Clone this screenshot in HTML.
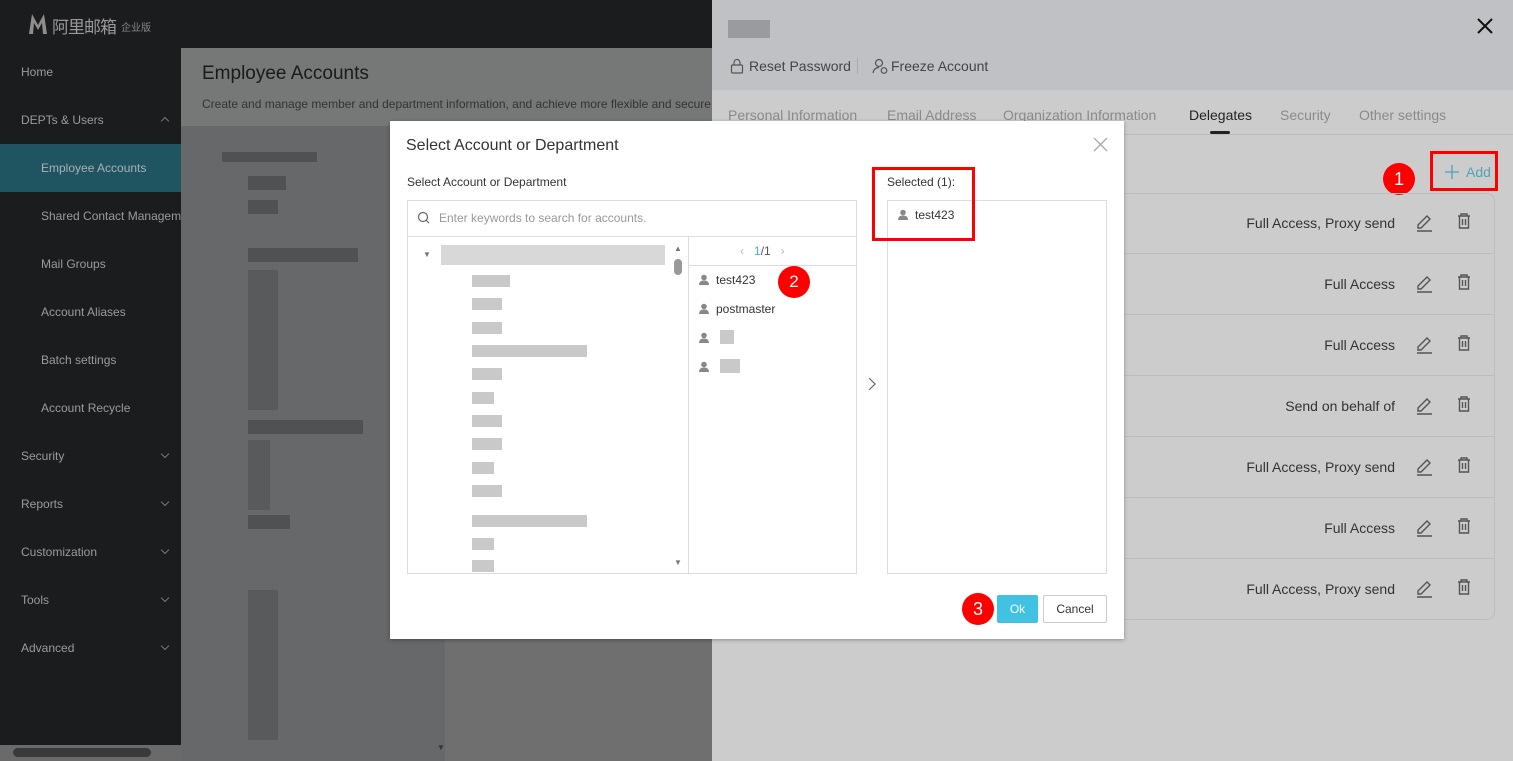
<!DOCTYPE html>
<html><head><meta charset="utf-8"><style>
*{box-sizing:border-box;margin:0;padding:0}
body{width:1513px;height:761px;overflow:hidden;position:relative;font-family:"Liberation Sans","Noto Sans CJK SC",sans-serif;background:#6b6c6e}
.abs{position:absolute}
#top{left:0;top:0;width:712px;height:48px;background:#1b1c1e}
#side{left:0;top:48px;width:181px;height:697px;background:#1b1c1e}
.nav{position:absolute;left:21px;font-size:12px;color:#9a9b9d}
.chev{position:absolute;left:162px;width:6px;height:6px;border-right:1px solid #777;border-bottom:1px solid #777;transform:rotate(45deg)}
.chevu{transform:rotate(-135deg)}
#main{left:181px;top:48px;width:531px;height:713px;background:#676869}
#mhead{left:181px;top:48px;width:531px;height:78px;background:#767777}
.blur{position:absolute;background:#505153}
#drawer{left:712px;top:0;width:801px;height:761px;background:#cccccc}
#dhead{left:712px;top:0;width:801px;height:90px;background:#c0c1c5}
.tab{position:absolute;top:107px;font-size:14px;color:#8a8a8a;font-family:"Liberation Sans",sans-serif}
.row{position:absolute;left:1107px;width:388px;height:61px;border-bottom:1px solid #bdbdbd;font-size:14px;color:#333;font-family:"Liberation Sans",sans-serif}
.row span{position:absolute;right:100px;top:22px;white-space:nowrap}
#modal{left:390px;top:121px;width:734px;height:518px;background:#fff;box-shadow:0 1px 4px rgba(0,0,0,.3)}
.box{position:absolute;border:1px solid #ddd}
.red{position:absolute;border:3px solid #f00}
.badge{position:absolute;width:32px;height:32px;border-radius:50%;background:#f00;color:#fff;font-size:18px;text-align:center;line-height:32px;font-family:"Liberation Sans",sans-serif}
.g{position:absolute;background:#c9c9c9}
</style></head><body>
<div id="top" class="abs"></div>
<svg class="abs" style="left:28px;top:13px" width="20" height="22"><path d="M1 21L4 1L10 12L16 1L19 21H15L14 10L10 17L6 10L5 21Z" fill="#8e8e8e"/></svg>
<div class="abs" style="left:52px;top:13px;font-size:17px;color:#999;white-space:nowrap;letter-spacing:-1px">阿里邮箱</div>
<div class="abs" style="left:121px;top:19px;font-size:10px;color:#888;white-space:nowrap">企业版</div>
<div id="side" class="abs"></div>
<div class="abs" style="left:0;top:144px;width:181px;height:48px;background:#1f5461"></div>
<div class="nav" style="top:65px">Home</div>
<div class="nav" style="top:113px">DEPTs &amp; Users</div><div class="chev chevu" style="top:118px"></div>
<div class="nav" style="top:161px;left:41px;color:#a6b2b6">Employee Accounts</div>
<div class="nav" style="top:209px;left:41px;white-space:nowrap;width:140px;overflow:hidden">Shared Contact Management</div>
<div class="nav" style="top:257px;left:41px">Mail Groups</div>
<div class="nav" style="top:305px;left:41px">Account Aliases</div>
<div class="nav" style="top:353px;left:41px">Batch settings</div>
<div class="nav" style="top:401px;left:41px">Account Recycle</div>
<div class="nav" style="top:449px">Security</div><div class="chev" style="top:451px"></div>
<div class="nav" style="top:497px">Reports</div><div class="chev" style="top:499px"></div>
<div class="nav" style="top:545px">Customization</div><div class="chev" style="top:547px"></div>
<div class="nav" style="top:593px">Tools</div><div class="chev" style="top:595px"></div>
<div class="nav" style="top:641px">Advanced</div><div class="chev" style="top:643px"></div>
<div class="abs" style="left:0;top:745px;width:181px;height:16px;background:#6a6a6a"></div>
<div class="abs" style="left:13px;top:748px;width:138px;height:9px;border-radius:5px;background:#3a3a3a"></div>
<div id="main" class="abs"></div>
<div class="abs" style="left:445px;top:126px;width:267px;height:635px;background:#6f6f6f"></div>
<div id="mhead" class="abs"></div>
<div class="abs" style="left:202px;top:63px;font-size:19px;color:#1a1a1a">Employee Accounts</div>
<div class="abs" style="left:202px;top:97px;font-size:12px;color:#333;white-space:nowrap">Create and manage member and department information, and achieve more flexible and secure</div>
<div class="abs" style="left:437px;top:743px;font-size:8px;color:#333">▼</div>
<div class="blur" style="left:222px;top:152px;width:95px;height:10px"></div>
<div class="blur" style="left:248px;top:176px;width:38px;height:14px"></div>
<div class="blur" style="left:248px;top:200px;width:30px;height:14px"></div>
<div class="blur" style="left:248px;top:248px;width:110px;height:14px"></div>
<div class="blur" style="left:248px;top:420px;width:115px;height:14px"></div>
<div class="blur" style="left:248px;top:515px;width:42px;height:14px"></div>
<div class="blur" style="left:248px;top:590px;width:30px;height:150px;opacity:.6"></div>
<div class="blur" style="left:248px;top:270px;width:30px;height:140px;opacity:.6"></div>
<div class="blur" style="left:248px;top:440px;width:22px;height:70px;opacity:.6"></div>
<div id="drawer" class="abs"></div>
<div id="dhead" class="abs"></div>
<div class="abs" style="left:728px;top:20px;width:42px;height:18px;background:#9a9b9f"></div>
<svg class="abs" style="left:1476px;top:17px" width="18" height="18"><path d="M2 2L16 16M16 2L2 16" stroke="#111" stroke-width="2"/></svg>
<svg class="abs" style="left:730px;top:58px" width="14" height="16"><rect x="1.5" y="7" width="11" height="8" rx="1" fill="none" stroke="#555" stroke-width="1.2"/><path d="M4 7V4.5a3 3 0 0 1 6 0V7" fill="none" stroke="#555" stroke-width="1.2"/></svg>
<div class="abs" style="left:749px;top:58px;font-size:14px;color:#444">Reset Password</div>
<div class="abs" style="left:857px;top:58px;width:1px;height:16px;background:#aaa"></div>
<svg class="abs" style="left:872px;top:58px" width="16" height="16"><circle cx="7" cy="5" r="3.5" fill="none" stroke="#555" stroke-width="1.2"/><path d="M1 15Q2 9.5 7 9.5" fill="none" stroke="#555" stroke-width="1.2"/><circle cx="12" cy="12.5" r="2.8" fill="none" stroke="#555" stroke-width="1.2"/></svg>
<div class="abs" style="left:891px;top:58px;font-size:14px;color:#444">Freeze Account</div>
<div class="tab" style="left:728px">Personal Information</div>
<div class="tab" style="left:887px">Email Address</div>
<div class="tab" style="left:1003px">Organization Information</div>
<div class="tab" style="left:1189px;color:#222">Delegates</div>
<div class="abs" style="left:1210px;top:131px;width:20px;height:3px;background:#222;border-radius:2px"></div>
<div class="tab" style="left:1280px">Security</div>
<div class="tab" style="left:1359px">Other settings</div>
<div class="abs" style="left:712px;top:134px;width:801px;height:1px;background:#bbb"></div>
<svg class="abs" style="left:1444px;top:164px" width="16" height="16"><path d="M8 1V15M1 8H15" stroke="#4fa3b8" stroke-width="1.3"/></svg>
<div class="abs" style="left:1466px;top:164px;font-size:14px;color:#4fa3b8">Add</div>
<div class="red" style="left:1430px;top:151px;width:68px;height:40px"></div>
<div class="badge" style="left:1383px;top:163px">1</div>
<div class="abs" style="left:1080px;top:193px;width:415px;height:427px;border:1px solid #bdbdbd;border-radius:8px"></div>
<div class="row" style="top:193px"><span>Full Access, Proxy send</span></div>
<div class="row" style="top:254px"><span>Full Access</span></div>
<div class="row" style="top:315px"><span>Full Access</span></div>
<div class="row" style="top:376px"><span>Send on behalf of</span></div>
<div class="row" style="top:437px"><span>Full Access, Proxy send</span></div>
<div class="row" style="top:498px"><span>Full Access</span></div>
<div class="row" style="top:559px;border:none"><span>Full Access, Proxy send</span></div>
<svg class="abs" style="left:1410px;top:206px" width="70" height="400">
<defs><g id="ic" fill="none" stroke="#555" stroke-width="1.4"><path d="M8 19 L17 10 L20 13 L11 22 L8 22 Z M7 25 H22"/><path d="M48 10h12 M51 10v-2h6v2 M49.5 10v12h9v-12 M52.5 13v6 M55.5 13v6"/></g></defs>
<use href="#ic"/><use href="#ic" y="61"/><use href="#ic" y="122"/><use href="#ic" y="183"/><use href="#ic" y="244"/><use href="#ic" y="305"/><use href="#ic" y="366"/>
</svg>
<div id="modal" class="abs"></div>
<div class="abs" style="left:406px;top:137px;font-size:16px;color:#333">Select Account or Department</div>
<svg class="abs" style="left:1093px;top:137px" width="15" height="15"><path d="M1 1L14 14M14 1L1 14" stroke="#aaa" stroke-width="1.3"/></svg>
<div class="abs" style="left:407px;top:175px;font-size:12px;color:#333">Select Account or Department</div>
<div class="abs" style="left:887px;top:175px;font-size:12px;color:#333">Selected (1):</div>
<div class="box" style="left:407px;top:200px;width:450px;height:374px"></div>
<div class="abs" style="left:407px;top:236px;width:450px;height:1px;background:#ddd"></div>
<div class="abs" style="left:688px;top:236px;width:1px;height:338px;background:#ddd"></div>
<div class="abs" style="left:689px;top:265px;width:168px;height:1px;background:#ddd"></div>
<svg class="abs" style="left:417px;top:211px" width="14" height="14"><circle cx="6" cy="6" r="4.5" fill="none" stroke="#666" stroke-width="1.2"/><path d="M9 9l3 3" stroke="#666" stroke-width="1.2"/></svg>
<div class="abs" style="left:439px;top:211px;font-size:12px;color:#999">Enter keywords to search for accounts.</div>
<div class="abs" style="left:441px;top:245px;width:224px;height:20px;background:#d8d8d8"></div>
<div class="abs" style="left:423px;top:250px;font-size:8px;color:#777">▼</div>
<div class="abs" style="left:674px;top:244px;font-size:8px;color:#777">▲</div>
<div class="abs" style="left:674px;top:558px;font-size:8px;color:#777">▼</div>
<div class="abs" style="left:674px;top:259px;width:8px;height:16px;border-radius:4px;background:#999"></div>
<div class="g" style="left:472px;top:275px;width:38px;height:12px"></div>
<div class="g" style="left:472px;top:298px;width:30px;height:12px"></div>
<div class="g" style="left:472px;top:322px;width:30px;height:12px"></div>
<div class="g" style="left:472px;top:345px;width:115px;height:12px"></div>
<div class="g" style="left:472px;top:368px;width:30px;height:12px"></div>
<div class="g" style="left:472px;top:392px;width:22px;height:12px"></div>
<div class="g" style="left:472px;top:415px;width:30px;height:12px"></div>
<div class="g" style="left:472px;top:438px;width:30px;height:12px"></div>
<div class="g" style="left:472px;top:462px;width:22px;height:12px"></div>
<div class="g" style="left:472px;top:485px;width:30px;height:12px"></div>
<div class="g" style="left:472px;top:515px;width:115px;height:12px"></div>
<div class="g" style="left:472px;top:538px;width:22px;height:12px"></div>
<div class="g" style="left:472px;top:560px;width:22px;height:12px"></div>
<div class="abs" style="left:740px;top:244px;font-size:12px;color:#bbb">‹ &nbsp; <span style="color:#3eb7d9">1</span><span style="color:#555">/1</span> &nbsp; ›</div>
<svg width="0" height="0" style="position:absolute"><defs><g id="pu"><circle cx="5" cy="3.5" r="2.8" fill="#888"/><path d="M0 11 Q0 6.5 5 6.5 Q10 6.5 10 11Z" fill="#888"/></g></defs></svg>
<svg class="abs" style="left:699px;top:274px" width="10" height="12"><use href="#pu"/></svg>
<div class="abs" style="left:716px;top:273px;font-size:12px;color:#333">test423</div>
<svg class="abs" style="left:699px;top:303px" width="10" height="12"><use href="#pu"/></svg>
<div class="abs" style="left:716px;top:302px;font-size:12px;color:#333">postmaster</div>
<svg class="abs" style="left:699px;top:332px" width="10" height="12"><use href="#pu"/></svg>
<div class="g" style="left:720px;top:330px;width:14px;height:14px"></div>
<svg class="abs" style="left:699px;top:361px" width="10" height="12"><use href="#pu"/></svg>
<div class="g" style="left:720px;top:359px;width:20px;height:14px"></div>
<div class="badge" style="left:778px;top:266px;font-size:17px">2</div>
<svg class="abs" style="left:868px;top:377px" width="8" height="14"><path d="M1 1L7 7L1 13" fill="none" stroke="#666" stroke-width="1.2"/></svg>
<div class="box" style="left:887px;top:200px;width:220px;height:374px"></div>
<svg class="abs" style="left:898px;top:209px" width="10" height="12"><use href="#pu"/></svg>
<div class="abs" style="left:915px;top:208px;font-size:12px;color:#333">test423</div>
<div class="red" style="left:872px;top:167px;width:103px;height:74px"></div>
<div class="badge" style="left:962px;top:593px">3</div>
<div class="abs" style="left:997px;top:595px;width:41px;height:28px;background:#42c2e3;border-radius:2px;color:#fff;font-size:12px;text-align:center;line-height:28px">Ok</div>
<div class="abs" style="left:1043px;top:595px;width:64px;height:28px;border:1px solid #ccc;border-radius:2px;color:#333;font-size:12px;text-align:center;line-height:26px">Cancel</div>
</body></html>
